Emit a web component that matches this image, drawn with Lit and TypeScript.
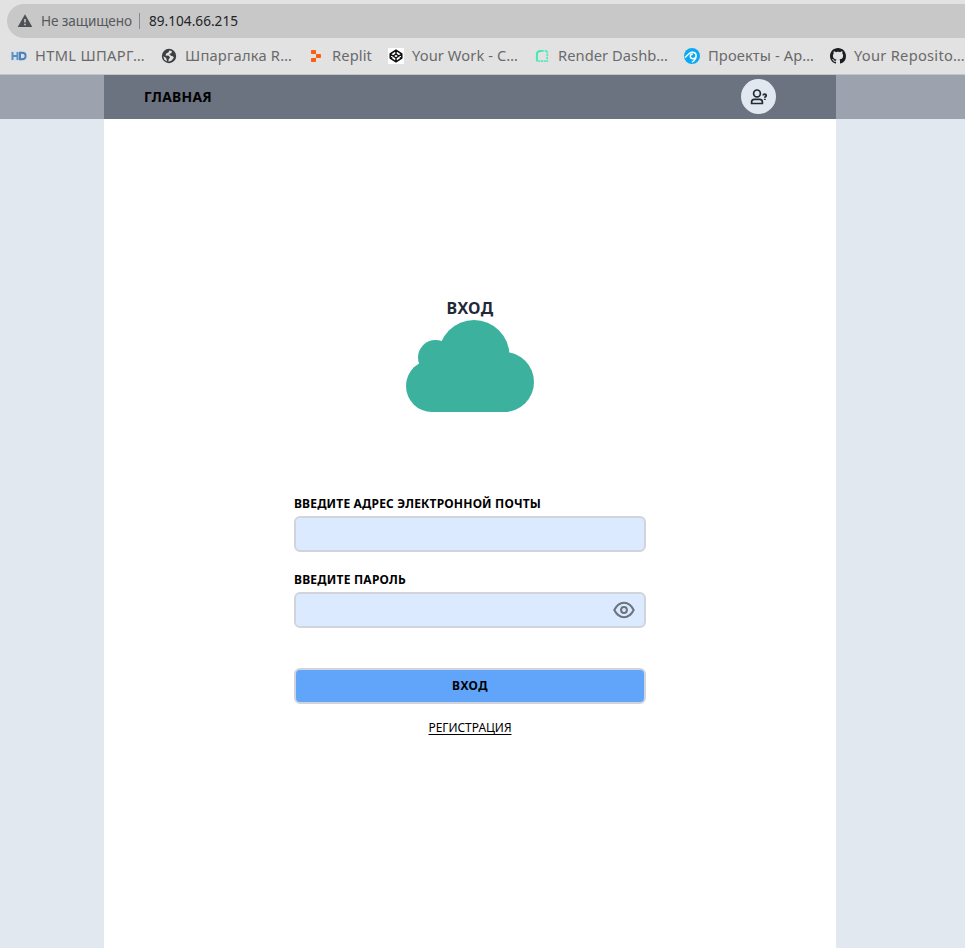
import { LitElement, html, css, svg } from "lit";
import { customElement, property } from "lit/decorators.js";

/** Text that spreads its letters evenly over a given width. */
@customElement("fit-text")
class FitText extends LitElement {
  static styles = css`
    :host { display: inline-block; white-space: nowrap; flex: none; }
    .text { display: inline-block; text-decoration: inherit; }
  `;
  @property({ type: Number }) width = 0;
  @property() text = "";

  render() {
    return html`<span class="text">${this.text}</span>`;
  }

  updated() {
    this.style.width = `${this.width}px`;
    const span = this.renderRoot.querySelector<HTMLElement>(".text")!;
    span.style.letterSpacing = "0";
    const natural = span.getBoundingClientRect().width;
    span.style.letterSpacing = `${(this.width - natural) / this.text.length}px`;
  }
}

const icons = {
  html: svg`<rect y="3" width="16" height="10" rx="2" fill="#d3e1ef"/><path d="M1.5 4v8M6.5 4v8M1.5 8h5" stroke="#5e8fc0" stroke-width="2" fill="none"/><path d="M9 4.8h2q3.6 0 3.6 3.2t-3.6 3.2H9z" stroke="#4d7db3" stroke-width="1.9" fill="none"/>`,
  globe: svg`<circle cx="8" cy="8" r="7.2" fill="#3c4043"/><path d="M8.2 2.4 7.6 4.2 5.2 5.4 4.4 7.6 7.8 7.8 9 9.6 7.6 11.4 7.5 13.8 10.6 12.6 12.8 9.8 12.2 8.6 10 7.8 8.3 6.2 10.7 4.8 10.8 2.9z" fill="#e2e2e2"/><path d="M2.3 8.3 5.2 10.1 6 13.4 3.4 11.7z" fill="#e2e2e2"/>`,
  replit: svg`<path d="M3.8 2h3.4q.8 0 .8.8V6H3.8q-.8 0-.8-.8V2.8q0-.8.8-.8zM8 6h4.2q.8 0 .8.8v2.4q0 .8-.8.8H8zM3.8 10H8v3.2q0 .8-.8.8H3.8q-.8 0-.8-.8v-2.4q0-.8.8-.8z" fill="#fa5f10"/>`,
  codepen: svg`<path d="M0 0h16v16H0z" fill="#fff"/><path d="M8 2.2 13.8 6v4L8 13.8 2.2 10V6zM2.2 6 8 10l5.8-4M2.2 10 8 6l5.8 4M8 2.2V6M8 10v3.8" fill="none" stroke="#111" stroke-width="1.5" stroke-linejoin="round"/>`,
  render: svg`<path d="M2.9 13V6.5Q2.9 2.9 6.5 2.9H8" fill="none" stroke="#46e8b5" stroke-width="2"/><path d="M8 2.9h5.2v10.3H2.5" fill="none" stroke="#5fe8bd" stroke-width="1.8" stroke-dasharray="2.2 .6"/>`,
  projects: svg`<circle cx="8" cy="8" r="8" fill="#0ca9f2"/><path d="M1 9.4 5.2 5.5Q7 4 9 4.3q3.2.5 3.2 3.6 0 3.3-4.2 6.4M12 8.5Q11.2 11 8.8 10.8 6.3 10.5 6.3 8.2 6.5 6 8.8 6" fill="none" stroke="#fff" stroke-width="1.4"/>`,
  github: svg`<path fill="#1b1f23" d="M8 0C3.58 0 0 3.58 0 8c0 3.54 2.29 6.53 5.47 7.59.4.07.55-.17.55-.38 0-.19-.01-.82-.01-1.49-2.01.37-2.53-.49-2.69-.94-.09-.23-.48-.94-.82-1.13-.28-.15-.68-.52-.01-.53.63-.01 1.08.58 1.23.82.72 1.21 1.87.87 2.33.66.07-.52.28-.87.51-1.07-1.78-.2-3.64-.89-3.64-3.95 0-.87.31-1.59.82-2.15-.08-.2-.36-1.02.08-2.12 0 0 .67-.21 2.2.82.64-.18 1.32-.27 2-.27s1.36.09 2 .27c1.53-1.04 2.2-.82 2.2-.82.44 1.1.16 1.92.08 2.12.51.56.82 1.27.82 2.15 0 3.07-1.87 3.75-3.65 3.95.29.25.54.73.54 1.48 0 1.07-.01 1.93-.01 2.2 0 .21.15.46.55.38A8.01 8.01 0 0 0 16 8c0-4.42-3.58-8-8-8z"/>`,
};

const bookmarks = [
  { icon: icons.html, text: "HTML ШПАРГ…", width: 110 },
  { icon: icons.globe, text: "Шпаргалка R…", width: 107 },
  { icon: icons.replit, text: "Replit", width: 40 },
  { icon: icons.codepen, text: "Your Work - C…", width: 106 },
  { icon: icons.render, text: "Render Dashb…", width: 110 },
  { icon: icons.projects, text: "Проекты - Ap…", width: 106 },
  { icon: icons.github, text: "Your Reposito…", width: 111 },
];

@customElement("app-root")
class AppRoot extends LitElement {
  static styles = css`
    :host { display: flex; flex-direction: column; height: 948px; overflow: hidden; background: #e2e8f0; color: #000; font-family: "Noto Sans", "Open Sans", sans-serif; }
    * { box-sizing: border-box; }
    svg { display: block; flex: none; }
    .browser { height: 75px; flex: none; background: #e2e2e2; border-bottom: 1px solid #c4c4c4; padding-top: 4px; overflow: hidden; }
    .address { height: 34px; margin-left: 7px; border-radius: 17px 0 0 17px; background: #c8c8c8; display: flex; align-items: center; padding-left: 10px; font-size: 13.6px; line-height: 20px; color: #56595d; }
    .address .status { margin-left: 8px; }
    .divider { width: 1px; height: 16px; background: #87898b; margin: 0 9px 0 7px; }
    .ip { color: #222426; }
    .bookmarks { display: flex; gap: 16px; padding-left: 11px; height: 36px; align-items: center; font-size: 14.7px; line-height: 20px; color: #6a6a6a; }
    .bookmark { display: flex; gap: 8px; align-items: center; flex: none; height: 20px; }
    .bookmark fit-text { margin-bottom: 2px; }
    .nav { height: 44px; flex: none; background: #9ca3af; }
    .navin { width: 732px; height: 44px; margin-left: 104px; background: #6b7280; display: flex; align-items: center; justify-content: space-between; padding: 0 60px 0 40px; font-size: 13.8px; font-weight: 700; }
    .home { line-height: 20px; }
    .user { width: 35px; height: 35px; border-radius: 50%; background: #e2e8f0; display: grid; place-items: center; margin-bottom: 1px; }
    .page { flex: 1; width: 732px; margin-left: 104px; background: #fff; display: flex; flex-direction: column; align-items: center; padding-top: 177px; }
    .title { font-size: 16px; line-height: 24px; font-weight: 700; color: #1f2937; }
    .form { width: 352px; margin-top: 84px; display: flex; flex-direction: column; font-size: 12px; }
    .label { font-weight: 700; line-height: 16px; height: 20px; }
    .field { height: 36px; border: 2px solid #d1d5db; border-radius: 6px; background: #dbeafe; display: flex; align-items: center; justify-content: flex-end; padding-right: 8px; margin-bottom: 20px; }
    .submit { height: 36px; margin-top: 20px; border: 2px solid #d1d5db; border-radius: 6px; background: #60a5fa; color: #000; font: 700 12px/16px "Noto Sans", sans-serif; padding: 0; display: flex; align-items: center; justify-content: center; }
    .link { align-self: center; margin-top: 16px; line-height: 16px; color: #000; text-underline-offset: 2px; }
    .link fit-text { text-decoration: underline; }
  `;

  render() {
    return html`
      <div class="browser">
        <div class="address">
          <svg width="16" height="16" viewBox="0 0 16 16"><path d="M8 1.3 15.3 14H.7z" fill="#4d5156"/><path d="M7.2 6h1.6v3.6H7.2zM7.2 10.7h1.6v1.6H7.2z" fill="#c8c8c8"/></svg>
          <fit-text class="status" text="Не защищено" .width=${91}></fit-text>
          <div class="divider"></div>
          <fit-text class="ip" text="89.104.66.215" .width=${89}></fit-text>
        </div>
        <div class="bookmarks">
          ${bookmarks.map((b) => html`<div class="bookmark">
            <svg width="16" height="16" viewBox="0 0 16 16">${b.icon}</svg>
            <fit-text .text=${b.text} .width=${b.width}></fit-text>
          </div>`)}
        </div>
      </div>
      <div class="nav">
        <div class="navin">
          <fit-text class="home" text="ГЛАВНАЯ" .width=${68}></fit-text>
          <div class="user">
            <svg width="18" height="16" viewBox="0 0 18 16" fill="none" stroke="#252b33" stroke-width="1.7"><circle cx="7" cy="4.4" r="3.4"/><path d="M1.6 14.5v-1.4q0-2.7 2.7-2.7h5.4q2.7 0 2.7 2.7v1.4z" stroke-linejoin="round"/><path d="M13.2 6.5q.1-1.3 1.5-1.3 1.5 0 1.5 1.4 0 1-1.4 1.7v.5M14.8 9.7v1.2" stroke-width="1.8"/></svg>
          </div>
        </div>
      </div>
      <div class="page">
        <fit-text class="title" text="ВХОД" .width=${47}></fit-text>
        <svg width="128" height="92" viewBox="0 0 128 92" fill="#3bb19e"><circle cx="26" cy="66" r="26"/><circle cx="98" cy="62" r="30"/><circle cx="68" cy="35.5" r="35.5"/><circle cx="29.5" cy="37.5" r="17.5"/><path d="M26 40h72v52H26z"/></svg>
        <div class="form">
          <div class="label"><fit-text text="ВВЕДИТЕ АДРЕС ЭЛЕКТРОННОЙ ПОЧТЫ" .width=${247}></fit-text></div>
          <div class="field"></div>
          <div class="label"><fit-text text="ВВЕДИТЕ ПАРОЛЬ" .width=${112}></fit-text></div>
          <div class="field">
            <svg width="24" height="24" viewBox="0 0 24 24" fill="none" stroke="#6b7280" stroke-width="2" stroke-linejoin="round"><path d="M2.3 12C4.7 7.2 8 4.8 12 4.8S19.3 7.2 21.7 12C19.3 16.8 16 19.2 12 19.2S4.7 16.8 2.3 12z"/><circle cx="12" cy="12" r="2.9"/></svg>
          </div>
          <button class="submit"><fit-text text="ВХОД" .width=${36}></fit-text></button>
          <a class="link"><fit-text text="РЕГИСТРАЦИЯ" .width=${83}></fit-text></a>
        </div>
      </div>
    `;
  }
}
